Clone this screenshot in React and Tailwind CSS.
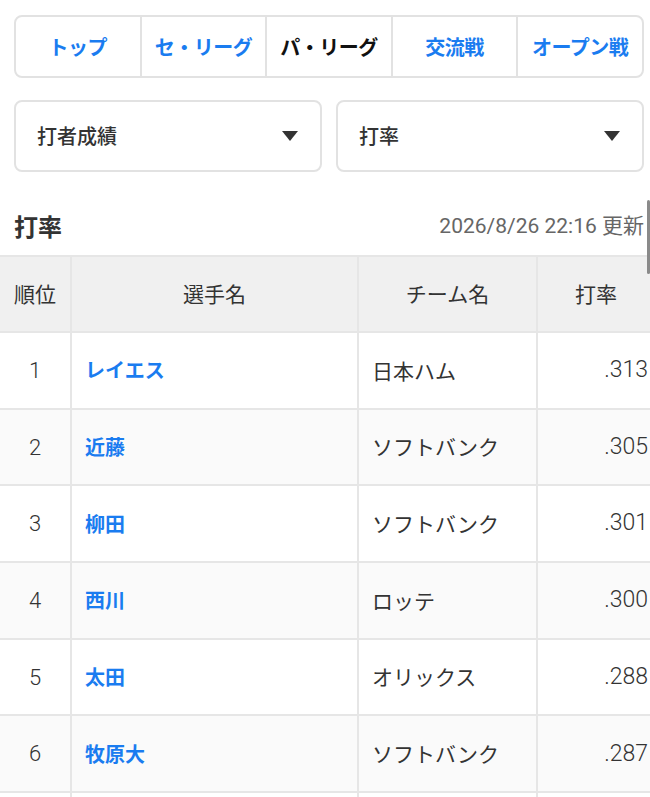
const TABS = [
  { label: 'トップ', active: false },
  { label: 'セ・リーグ', active: false },
  { label: 'パ・リーグ', active: true },
  { label: '交流戦', active: false },
  { label: 'オープン戦', active: false },
]

const ROWS = [
  { rank: 1, name: 'レイエス', team: '日本ハム', avg: '.313' },
  { rank: 2, name: '近藤', team: 'ソフトバンク', avg: '.305' },
  { rank: 3, name: '柳田', team: 'ソフトバンク', avg: '.301' },
  { rank: 4, name: '西川', team: 'ロッテ', avg: '.300' },
  { rank: 5, name: '太田', team: 'オリックス', avg: '.288' },
  { rank: 6, name: '牧原大', team: 'ソフトバンク', avg: '.287' },
  { rank: 7, name: '', team: '', avg: '' },
]

const NUM_FONT = { fontFamily: 'Roboto, "Noto Sans CJK JP", sans-serif' }

function Select({ label }) {
  return (
    <div className="flex-1 h-[72px] border-2 border-[#e2e2e2] rounded-lg flex items-center justify-between pl-[21px] pr-[22px]">
      <span className="text-[20px] font-medium text-[#333]">{label}</span>
      <span className="w-0 h-0 border-l-[8px] border-r-[8px] border-t-[10px] border-l-transparent border-r-transparent border-t-[#333]" />
    </div>
  )
}

export default function App() {
  return (
    <div
      className="relative w-[650px] h-[797px] overflow-hidden bg-white text-[#333]"
      style={{ fontFamily: '"Noto Sans CJK JP", "Noto Sans", sans-serif' }}
    >
      {/* リーグタブ */}
      <div className="pl-[14px] pr-[6px] pt-[15px]">
        <div className="flex h-[63px] border-2 border-[#e2e2e2] rounded-lg">
          {TABS.map((t, i) => (
            <div
              key={t.label}
              className={`flex-1 flex items-center justify-center text-[20px] font-bold tracking-tight ${
                i < TABS.length - 1 ? 'border-r-2 border-[#e2e2e2]' : ''
              } ${t.active ? 'text-[#111]' : 'text-[#1a7cf0]'}`}
            >
              {t.label}
            </div>
          ))}
        </div>
      </div>

      {/* セレクト */}
      <div className="flex gap-[14px] pl-[14px] pr-[6px] pt-[22px]">
        <Select label="打者成績" />
        <Select label="打率" />
      </div>

      {/* 見出し */}
      <div className="flex items-center justify-between pl-[14px] pr-[6px] pt-[36px] pb-[11px]">
        <h2 className="text-[24px] font-bold text-[#333] leading-[36px]">打率</h2>
        <span className="text-[21px] text-[#666] leading-[36px]" style={NUM_FONT}>
          2026/8/26 22:16 更新
        </span>
      </div>

      {/* 表 */}
      <div className="w-[664px] border-t-2 border-[#e6e6e6]">
        <div className="flex h-[76px] bg-[#f0f0f0] border-b-2 border-[#e6e6e6] text-[21px] text-[#333]">
          <div className="w-[72px] border-r-2 border-[#e6e6e6] flex items-center justify-center">順位</div>
          <div className="w-[287px] border-r-2 border-[#e6e6e6] flex items-center justify-center">選手名</div>
          <div className="w-[179px] border-r-2 border-[#e6e6e6] flex items-center justify-center">チーム名</div>
          <div className="flex-1 flex items-center justify-center pr-[10px]">打率</div>
        </div>
        {ROWS.map((r, i) => (
          <div
            key={r.rank}
            className={`flex h-[76.7px] border-b-2 border-[#e6e6e6] text-[20px] ${
              i % 2 === 1 ? 'bg-[#fafafa]' : 'bg-white'
            }`}
          >
            <div
              className="w-[72px] border-r-2 border-[#e6e6e6] flex items-center justify-center text-[#333] text-[22px] font-light"
              style={NUM_FONT}
            >
              {r.name ? r.rank : ''}
            </div>
            <div className="w-[287px] border-r-2 border-[#e6e6e6] flex items-center pl-[13px] font-bold text-[#1a7cf0]">
              {r.name}
            </div>
            <div className="w-[179px] border-r-2 border-[#e6e6e6] flex items-center pl-[13px] text-[#333] text-[21px]">
              {r.team}
            </div>
            <div
              className="flex-1 flex items-center justify-end pr-[16px] text-[#333] text-[23px] font-light"
              style={NUM_FONT}
            >
              {r.avg}
            </div>
          </div>
        ))}
      </div>

      {/* スクロールインジケータ */}
      <div className="absolute right-0 top-[200px] w-[3px] h-[74px] rounded-full bg-[#8a8a8a]" />
    </div>
  )
}
